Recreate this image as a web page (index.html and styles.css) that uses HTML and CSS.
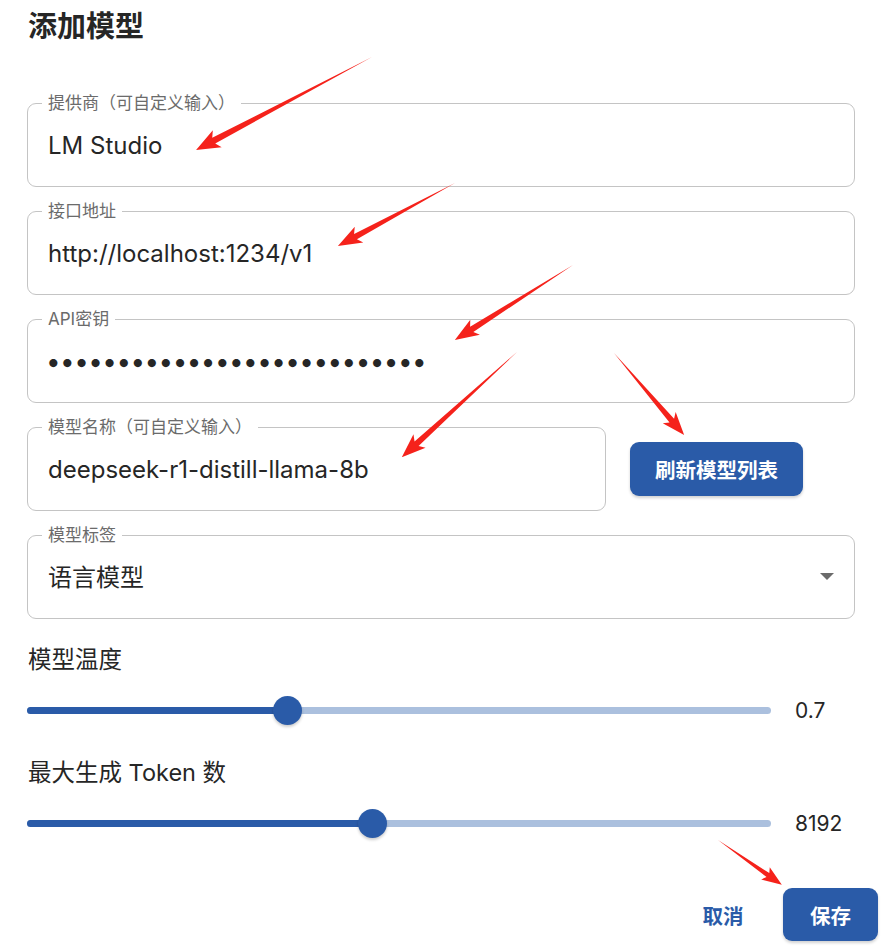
FILE: index.html
```html
<!DOCTYPE html>
<html lang="zh-CN">
<head>
    <meta charset="UTF-8">
    <meta name="viewport" content="width=device-width, initial-scale=1.0">
    <title>添加模型</title>
    <link rel="stylesheet" href="styles.css">
</head>
<body>
    <div class="dialog">
        <h1 class="dialog-title">添加模型</h1>

        <form class="model-form">
            <fieldset class="field">
                <legend>提供商（可自定义输入）</legend>
                <div class="field-value">LM Studio</div>
            </fieldset>

            <fieldset class="field">
                <legend>接口地址</legend>
                <div class="field-value">http://localhost:1234/v1</div>
            </fieldset>

            <fieldset class="field">
                <legend>API密钥</legend>
                <div class="field-value secret">•••••••••••••••••••••••••••</div>
            </fieldset>

            <div class="field-row">
                <fieldset class="field">
                    <legend>模型名称（可自定义输入）</legend>
                    <div class="field-value">deepseek-r1-distill-llama-8b</div>
                </fieldset>
                <button type="button" class="btn btn-primary btn-refresh">刷新模型列表</button>
            </div>

            <fieldset class="field">
                <legend>模型标签</legend>
                <div class="field-value select-value">
                    <span>语言模型</span>
                    <svg class="select-arrow" width="14" height="7" viewBox="0 0 14 7"><path d="M0 0h14L7 7z" fill="#6b6b6b"/></svg>
                </div>
            </fieldset>

            <div class="slider-group">
                <div class="slider-label">模型温度</div>
                <div class="slider-row">
                    <div class="slider-rail">
                        <div class="slider-track" style="width: 35%"></div>
                        <div class="slider-thumb" style="left: 35%"></div>
                    </div>
                    <span class="slider-value">0.7</span>
                </div>
            </div>

            <div class="slider-group">
                <div class="slider-label">最大生成 Token 数</div>
                <div class="slider-row">
                    <div class="slider-rail">
                        <div class="slider-track" style="width: 46.5%"></div>
                        <div class="slider-thumb" style="left: 46.5%"></div>
                    </div>
                    <span class="slider-value">8192</span>
                </div>
            </div>

            <div class="form-actions">
                <button type="button" class="btn btn-text">取消</button>
                <button type="submit" class="btn btn-primary btn-save">保存</button>
            </div>
        </form>
    </div>

    <!-- red annotation arrows drawn over the screenshot -->
    <svg class="annotations" width="886" height="948" viewBox="0 0 886 948">
        <g fill="#f5221b">
            <path transform="translate(372 57) rotate(152.15)" d="M0 0L179 -3.2L175 -9.5L199 0L175 9.5L179 3.2Z"/>
            <path transform="translate(455 183) rotate(151.7)" d="M0 0L113 -3L109 -9L133 0L109 9L113 3Z"/>
            <path transform="translate(573 265) rotate(147.56)" d="M0 0L120 -3L116 -9L140 0L116 9L120 3Z"/>
            <path transform="translate(517 352) rotate(137.6)" d="M0 0L136 -3L132 -9L156 0L132 9L136 3Z"/>
            <path transform="translate(614 353) rotate(49.5)" d="M0 0L89 -3L85 -8.5L108 0L85 8.5L89 3Z"/>
            <path transform="translate(718 840) rotate(35.1)" d="M0 0L61 -2.4L58 -7.5L78 0L58 7.5L61 2.4Z"/>
        </g>
    </svg>
</body>
</html>
```

FILE: styles.css
```css
* { margin: 0; padding: 0; box-sizing: border-box; }
body {
    font-family: Inter, "Noto Sans CJK SC", sans-serif;
    background: #fff;
    color: rgba(0,0,0,0.87);
    width: 886px; height: 948px; overflow: hidden;
    position: relative;
}

.dialog { padding: 7px 31px 0 27px; }
.dialog-title {
    font-size: 29px; font-weight: 700; line-height: 40px;
    color: #262626; margin-bottom: 46px; padding-left: 1px;
}

.model-form { display: flex; flex-direction: column; gap: 14px; }

.field {
    border: 1px solid #c4c4c4; border-radius: 9px;
    padding: 0 14px 8px 14px; min-width: 0;
    width: 828px;
}
.field legend {
    font-size: 17px; line-height: 20px; color: #6b6b6b;
    padding: 0 6px; margin-left: 0;
}
.field-value {
    height: 65px; display: flex; align-items: center;
    padding-left: 6px;
    font-size: 24px; color: #262626; white-space: nowrap;
}
.secret { font-size: 26px; letter-spacing: -0.55px; padding-left: 4px; }
.select-value { justify-content: space-between; padding-right: 6px; padding-bottom: 4px; }
.select-arrow { display: block; margin-top: 2px; }

.field-row { display: flex; align-items: flex-end; gap: 24px; }
.field-row .field { width: 579px; }

.btn {
    border: none; border-radius: 9px; cursor: pointer;
    font-family: inherit; font-weight: 700; font-size: 20.5px;
}
.btn-primary { background: #2a5ba8; color: #fff; box-shadow: 0 2px 3px rgba(0,0,0,0.18); }
.btn-refresh { width: 173px; height: 54px; margin-bottom: 15px; }
.btn-text { background: transparent; color: #2a5ba8; width: 72px; height: 53px; }
.btn-save { width: 95px; height: 53px; }

.slider-group { margin-top: 11px; }
.slider-group + .slider-group { margin-top: 18px; }
.slider-label { font-size: 23.5px; line-height: 32px; color: #262626; padding-left: 1px; }
.slider-row { display: flex; align-items: center; height: 30px; margin-top: 19px; width: 828px; }
.slider-rail {
    flex: 1; position: relative; height: 7px; border-radius: 4px;
    background: #abc0de;
}
.slider-track { height: 100%; border-radius: 4px; background: #2a5ba8; }
.slider-thumb {
    position: absolute; top: 50%; width: 29px; height: 29px;
    margin: -14.5px 0 0 -14.5px; border-radius: 50%;
    background: #2a5ba8; box-shadow: 0 2px 3px rgba(0,0,0,0.2);
}
.slider-value { width: 60px; margin-left: 24px; font-size: 21px; color: #262626; }

.form-actions {
    display: flex; justify-content: flex-end; gap: 24px;
    margin-top: 36px; margin-right: -23px;
}

.annotations { position: absolute; top: 0; left: 0; pointer-events: none; }
```
